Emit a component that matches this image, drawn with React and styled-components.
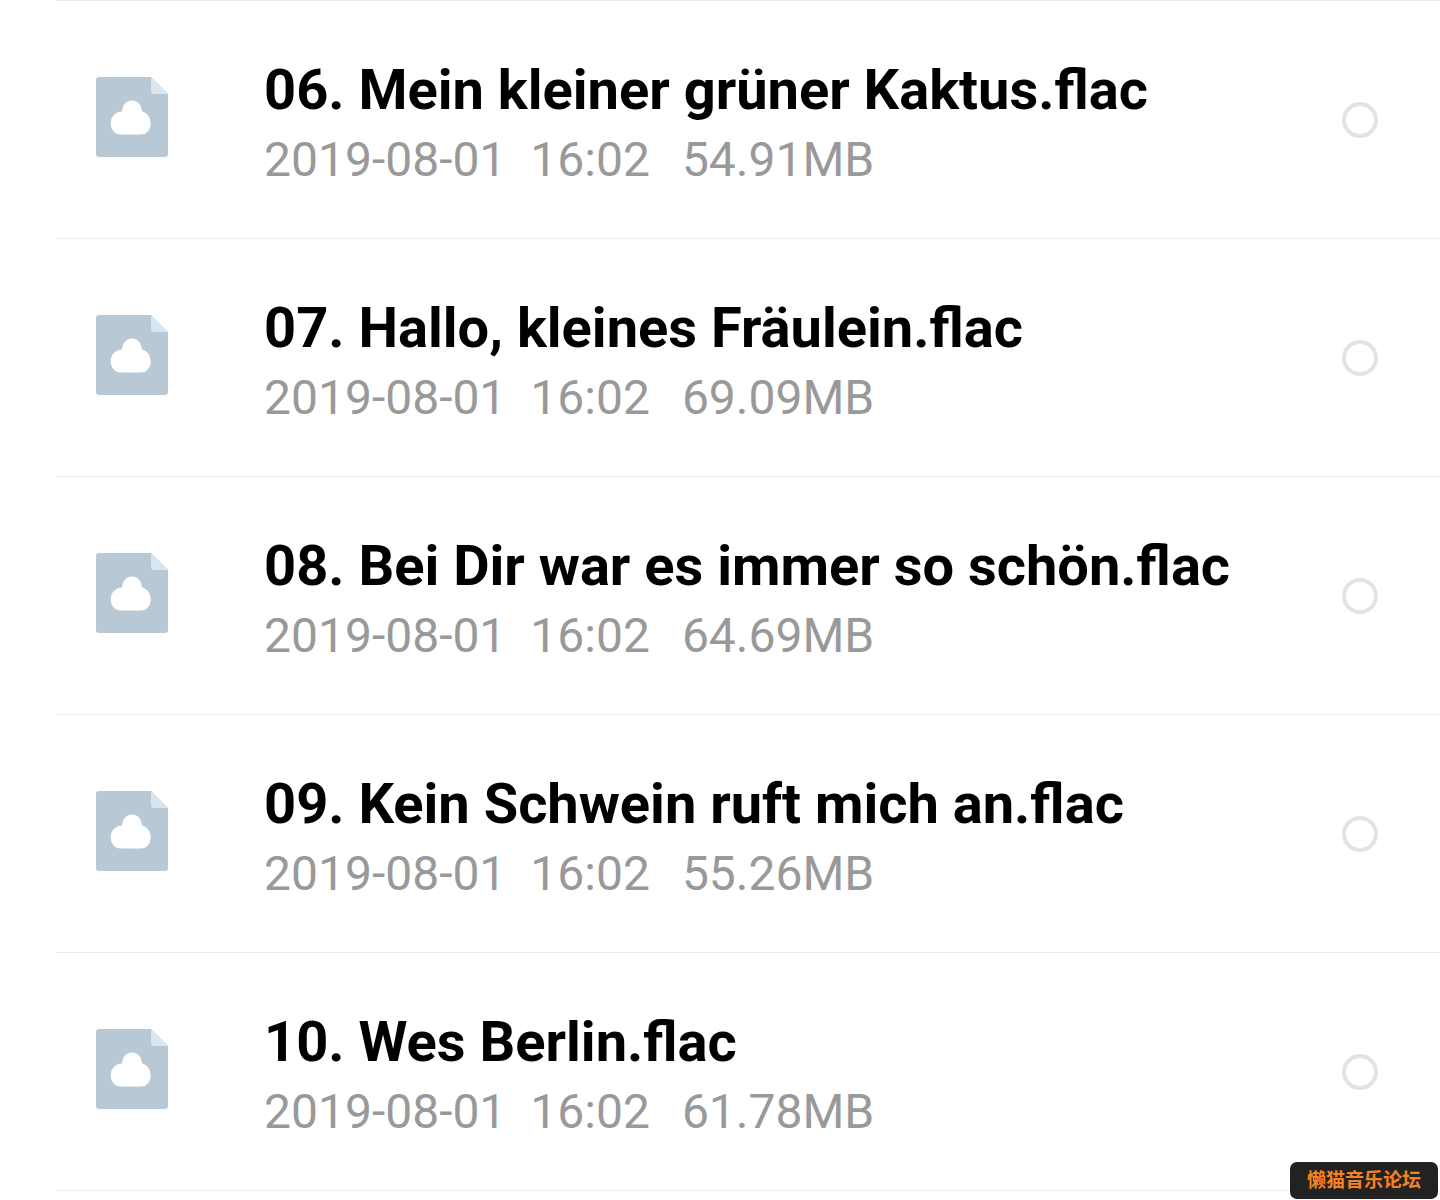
import React from 'react'
import styled, { createGlobalStyle } from 'styled-components'

const files = [
  { name: '06. Mein kleiner grüner Kaktus.flac', date: '2019-08-01', time: '16:02', size: '54.91MB' },
  { name: '07. Hallo, kleines Fräulein.flac', date: '2019-08-01', time: '16:02', size: '69.09MB' },
  { name: '08. Bei Dir war es immer so schön.flac', date: '2019-08-01', time: '16:02', size: '64.69MB' },
  { name: '09. Kein Schwein ruft mich an.flac', date: '2019-08-01', time: '16:02', size: '55.26MB' },
  { name: '10. Wes Berlin.flac', date: '2019-08-01', time: '16:02', size: '61.78MB' },
]

const FileIcon = () => (
  <Icon viewBox="0 0 72 80" aria-hidden="true">
    <path d="M3 0H55L72 17V77a3 3 0 0 1-3 3H3a3 3 0 0 1-3-3V3a3 3 0 0 1 3-3z" fill="#b9c8d5" />
    <path d="M55 0L72 17H58a3 3 0 0 1-3-3z" fill="#d9e6ef" />
    <path
      d="M25 57.600C19 57.600 14.700 52.500 14.700 46.500C14.700 40 19.500 34.800 26 34.600C26.500 28 30.500 23.600 36 23.600C41.500 23.600 45.500 28 46 34.600C51 35.500 54.700 40.500 54.700 46.500C54.700 52.500 50.500 57.600 45 57.600z"
      fill="#fff"
    />
  </Icon>
)

const FileRow = ({ file, index }) => (
  <Row>
    <FileIcon />
    <Info htmlFor={`file-${index}`}>
      <Name>{file.name}</Name>
      <Meta>
        <Created>
          <span>{file.date}</span>
          <span>{file.time}</span>
        </Created>
        <span>{file.size}</span>
      </Meta>
    </Info>
    <Check type="checkbox" id={`file-${index}`} />
  </Row>
)

const App = () => (
  <React.Fragment>
    <GlobalStyle />
    <List>
      {files.map((file, index) => (
        <FileRow key={file.name} file={file} index={index} />
      ))}
    </List>
    <Badge>懒猫音乐论坛</Badge>
  </React.Fragment>
)

const GlobalStyle = createGlobalStyle`
  body {
    margin: 0;
    background: #fff;
    font-family: Roboto, 'Noto Sans CJK SC', sans-serif;
  }
`

const List = styled.ul`
  margin: 0 0 0 56px;
  padding: 0;
  list-style: none;
  border-top: 1px solid #ebebeb;
`

const Row = styled.li`
  box-sizing: border-box;
  display: flex;
  align-items: center;
  min-height: 238px;
  padding: 0 62px 0 40px;
  border-bottom: 1px solid #ebebeb;
`

const Icon = styled.svg`
  flex: none;
  width: 72px;
  height: 80px;
  margin-bottom: 6px;
`

const Info = styled.label`
  flex: 1;
  min-width: 0;
  margin-left: 96px;
  padding-top: 8px;
  cursor: pointer;
`

const Name = styled.div`
  color: #000;
  font-size: 56px;
  font-weight: 700;
  line-height: 72px;
`

const Meta = styled.div`
  display: flex;
  gap: 32px;
  color: #999;
  font-size: 48px;
  line-height: 68px;
`

const Created = styled.span`
  display: flex;
  gap: 24px;
`

const Check = styled.input`
  appearance: none;
  box-sizing: border-box;
  flex: none;
  width: 36px;
  height: 36px;
  margin: 0;
  border: 4px solid #e3e3e3;
  border-radius: 50%;
  background: #fff;
  cursor: pointer;

  &:checked {
    background: #b9c8d5;
  }
`

const Badge = styled.div`
  position: fixed;
  right: 2px;
  bottom: 1px;
  box-sizing: border-box;
  width: 148px;
  height: 37px;
  border-radius: 7px;
  background: #222;
  color: #f58220;
  font-size: 19px;
  font-weight: 700;
  line-height: 37px;
  text-align: center;
`

export default App
